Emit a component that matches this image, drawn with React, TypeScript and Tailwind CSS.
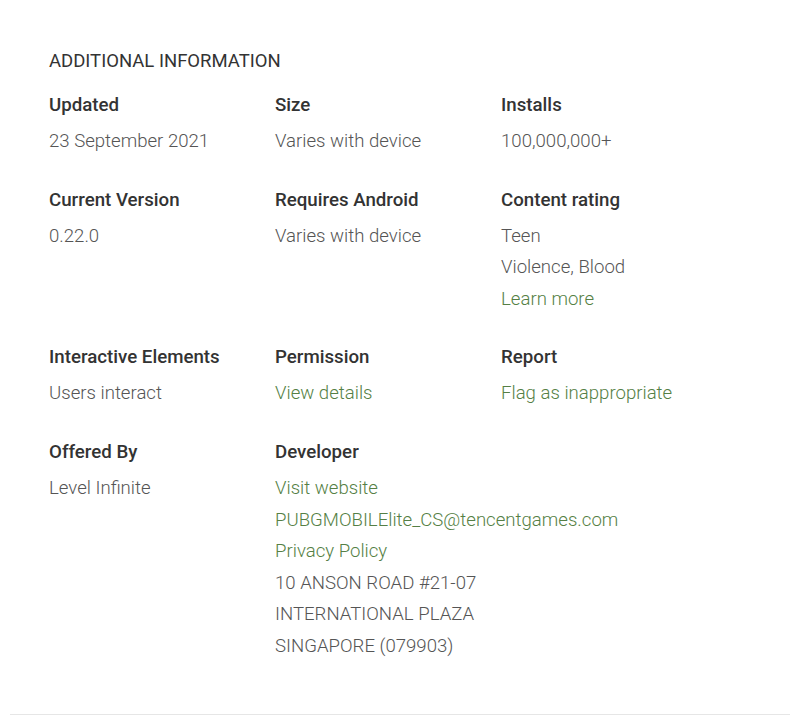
const GREEN = 'text-[#557f45]';

type Line = { text: string; link?: boolean };
type Cell = { label: string; lines: Line[] };

const rows: Cell[][] = [
  [
    { label: 'Updated', lines: [{ text: '23 September 2021' }] },
    { label: 'Size', lines: [{ text: 'Varies with device' }] },
    { label: 'Installs', lines: [{ text: '100,000,000+' }] },
  ],
  [
    { label: 'Current Version', lines: [{ text: '0.22.0' }] },
    { label: 'Requires Android', lines: [{ text: 'Varies with device' }] },
    {
      label: 'Content rating',
      lines: [{ text: 'Teen' }, { text: 'Violence, Blood' }, { text: 'Learn more', link: true }],
    },
  ],
  [
    { label: 'Interactive Elements', lines: [{ text: 'Users interact' }] },
    { label: 'Permission', lines: [{ text: 'View details', link: true }] },
    { label: 'Report', lines: [{ text: 'Flag as inappropriate', link: true }] },
  ],
  [
    { label: 'Offered By', lines: [{ text: 'Level Infinite' }] },
    {
      label: 'Developer',
      lines: [
        { text: 'Visit website', link: true },
        { text: 'PUBGMOBILElite_CS@tencentgames.com', link: true },
        { text: 'Privacy Policy', link: true },
        { text: '10 ANSON ROAD #21-07' },
        { text: 'INTERNATIONAL PLAZA' },
        { text: 'SINGAPORE (079903)' },
      ],
    },
  ],
];

export default function App() {
  return (
    <div className="w-[800px] h-[720px] bg-white font-['Roboto',sans-serif] flex flex-col">
      <div className="flex-1 pl-[49px] pt-[49px]">
        <h2 className="text-[18.5px] leading-6 text-[#333] uppercase">Additional Information</h2>
        <div className="mt-5 flex flex-col gap-y-[30px]">
          {rows.map((row, i) => (
            <div key={i} className="grid grid-cols-[226px_226px_226px]">
              {row.map((c) => (
                <div key={c.label}>
                  <p className="text-[18.7px] leading-6 font-medium text-[#333] mb-[9px]">{c.label}</p>
                  {c.lines.map((l) => (
                    <p key={l.text} className={`text-[18.6px] leading-[31.6px] font-light ${l.link ? GREEN : 'text-[#555]'}`}>
                      {l.text}
                    </p>
                  ))}
                </div>
              ))}
            </div>
          ))}
        </div>
      </div>
      <div className="mx-[10px] mb-[5px] h-px bg-[#e6e6e6]" />
    </div>
  );
}
